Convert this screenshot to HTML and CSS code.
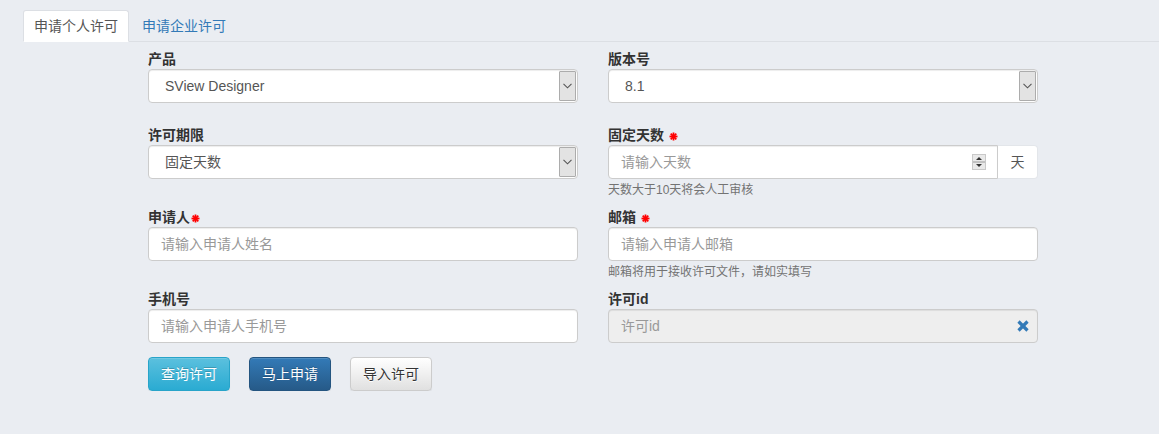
FILE: index.html
```html
<!DOCTYPE html>
<html lang="zh-CN">
<head>
    <meta charset="UTF-8">
    <title>申请许可</title>
    <link rel="stylesheet" href="styles.css">
</head>
<body>

<ul class="tabs">
    <li class="active"><a href="#">申请个人许可</a></li>
    <li><a href="#">申请企业许可</a></li>
</ul>

<form class="apply">
    <div class="fields">
        <div class="field">
            <label>产品</label>
            <div class="select">
                <span class="select-text">SView Designer</span>
                <span class="select-btn"><svg width="9" height="6" viewBox="0 0 9 6"><polyline points="0.5,0.8 4.5,4.8 8.5,0.8" fill="none" stroke="#555" stroke-width="1.1"/></svg></span>
            </div>
        </div>
        <div class="field">
            <label>版本号</label>
            <div class="select">
                <span class="select-text">8.1</span>
                <span class="select-btn"><svg width="9" height="6" viewBox="0 0 9 6"><polyline points="0.5,0.8 4.5,4.8 8.5,0.8" fill="none" stroke="#555" stroke-width="1.1"/></svg></span>
            </div>
        </div>

        <div class="field">
            <label>许可期限</label>
            <div class="select">
                <span class="select-text">固定天数</span>
                <span class="select-btn"><svg width="9" height="6" viewBox="0 0 9 6"><polyline points="0.5,0.8 4.5,4.8 8.5,0.8" fill="none" stroke="#555" stroke-width="1.1"/></svg></span>
            </div>
        </div>
        <div class="field">
            <label>固定天数<span class="req spaced"><svg width="9" height="9" viewBox="0 0 9 9"><g stroke="#f00" stroke-width="1.8"><line x1="4.5" y1="0.5" x2="4.5" y2="8.5"/><line x1="0.5" y1="4.5" x2="8.5" y2="4.5"/><line x1="1.7" y1="1.7" x2="7.3" y2="7.3"/><line x1="7.3" y1="1.7" x2="1.7" y2="7.3"/></g></svg></span></label>
            <div class="group">
                <div class="input with-addon">
                    <span class="ph">请输入天数</span>
                    <span class="spin"><svg width="14" height="16" viewBox="0 0 14 16"><rect x="0.5" y="0.5" width="13" height="15" fill="#e9e9e9" stroke="#c9c9c9"/><line x1="1" y1="8" x2="13" y2="8" stroke="#9a9a9a"/><polygon points="7,3 4,6 10,6" fill="#333"/><polygon points="7,13 4,10 10,10" fill="#333"/></svg></span>
                </div>
                <span class="addon">天</span>
            </div>
            <p class="help">天数大于10天将会人工审核</p>
        </div>

        <div class="field">
            <label>申请人<span class="req"><svg width="9" height="9" viewBox="0 0 9 9"><g stroke="#f00" stroke-width="1.8"><line x1="4.5" y1="0.5" x2="4.5" y2="8.5"/><line x1="0.5" y1="4.5" x2="8.5" y2="4.5"/><line x1="1.7" y1="1.7" x2="7.3" y2="7.3"/><line x1="7.3" y1="1.7" x2="1.7" y2="7.3"/></g></svg></span></label>
            <div class="input"><span class="ph">请输入申请人姓名</span></div>
        </div>
        <div class="field">
            <label>邮箱<span class="req spaced"><svg width="9" height="9" viewBox="0 0 9 9"><g stroke="#f00" stroke-width="1.8"><line x1="4.5" y1="0.5" x2="4.5" y2="8.5"/><line x1="0.5" y1="4.5" x2="8.5" y2="4.5"/><line x1="1.7" y1="1.7" x2="7.3" y2="7.3"/><line x1="7.3" y1="1.7" x2="1.7" y2="7.3"/></g></svg></span></label>
            <div class="input"><span class="ph">请输入申请人邮箱</span></div>
            <p class="help">邮箱将用于接收许可文件，请如实填写</p>
        </div>

        <div class="field">
            <label>手机号</label>
            <div class="input"><span class="ph">请输入申请人手机号</span></div>
        </div>
        <div class="field">
            <label>许可id</label>
            <div class="input disabled">
                <span class="ph">许可id</span>
                <span class="clear"><svg width="12" height="12" viewBox="0 0 12 12"><g stroke="#337ab7" stroke-width="3.2"><line x1="1.5" y1="1.5" x2="10.5" y2="10.5"/><line x1="10.5" y1="1.5" x2="1.5" y2="10.5"/></g></svg></span>
            </div>
        </div>
    </div>

    <div class="buttons">
        <button type="button" class="btn btn-info">查询许可</button>
        <button type="button" class="btn btn-primary">马上申请</button>
        <button type="button" class="btn btn-default">导入许可</button>
    </div>
</form>

</body>
</html>
```

FILE: styles.css
```css
/* 基础样式 */
*{margin: 0; padding: 0; box-sizing: border-box; list-style: none;}
body{background: #eaedf2; font: 14px/20px "Liberation Sans", "Noto Sans CJK SC", sans-serif; color: #333;}

/* 选项卡 */
.tabs{display: flex; margin: 10px 0 0 23px; border-bottom: 1px solid #dcdfe4;}
.tabs li{margin: 0 2px -1px 0;}
.tabs a{display: block; padding: 5px 10px; border: 1px solid transparent; border-radius: 3px 3px 0 0; color: #337ab7; text-decoration: none;}
.tabs li.active a{background: #fff; border-color: #dcdfe4; border-bottom-color: #fff; color: #555;}

/* 表单 */
.apply{padding: 7px 0 0 148px;}
.fields{display: grid; grid-template-columns: 430px 430px; column-gap: 30px; row-gap: 22px;}
.field label{display: flex; align-items: center; font-weight: bold; height: 20px; color: #333;}
.req{display: inline-flex; margin: 2px 0 0 1px;}
.req.spaced{margin-left: 5px;}

.input, .select{display: flex; align-items: center; height: 34px; background: #fff; border: 1px solid #ccc; border-radius: 4px; box-shadow: inset 0 1px 1px rgba(0,0,0,.075);}
.input{padding: 0 12px;}
.input .ph{flex: 1; color: #999;}
.input.disabled{background: #eee;}
.clear{display: flex; margin-right: -4px;}
.spin{display: flex; margin-right: -1px;}

.group{display: flex;}
.group .input{flex: 1; border-radius: 4px 0 0 4px;}
.addon{width: 40px; height: 34px; line-height: 32px; text-align: center; background: #fff; border: 1px solid #e3e6ea; border-left: 0; border-radius: 0 4px 4px 0; color: #555;}

.select{padding: 1px;}
.select-text{flex: 1; padding-left: 15px; color: #555;}
.select-btn{display: flex; align-items: center; justify-content: center; width: 17px; height: 30px; background: #e3e3e3; border: 1px solid #acacac; border-radius: 1px;}

.help{margin: 3px 0 -13px; font-size: 12px; line-height: 16px; color: #737373;}

/* 按钮 */
.buttons{display: flex; gap: 19px; margin-top: 14px;}
.btn{width: 82px; height: 34px; padding: 6px 12px; border: 1px solid; border-radius: 4px; font: inherit; cursor: pointer; box-shadow: inset 0 1px 0 rgba(255,255,255,.15), 0 1px 1px rgba(0,0,0,.075);}
.btn-info{color: #fff; background: linear-gradient(#5bc0de, #2aabd2); border-color: #28a4c9; text-shadow: 0 -1px 0 rgba(0,0,0,.2);}
.btn-primary{color: #fff; background: linear-gradient(#337ab7, #265a88); border-color: #245580; text-shadow: 0 -1px 0 rgba(0,0,0,.2);}
.btn-default{color: #333; background: linear-gradient(#fff, #e0e0e0); border-color: #ccc; text-shadow: 0 1px 0 #fff;}
```
